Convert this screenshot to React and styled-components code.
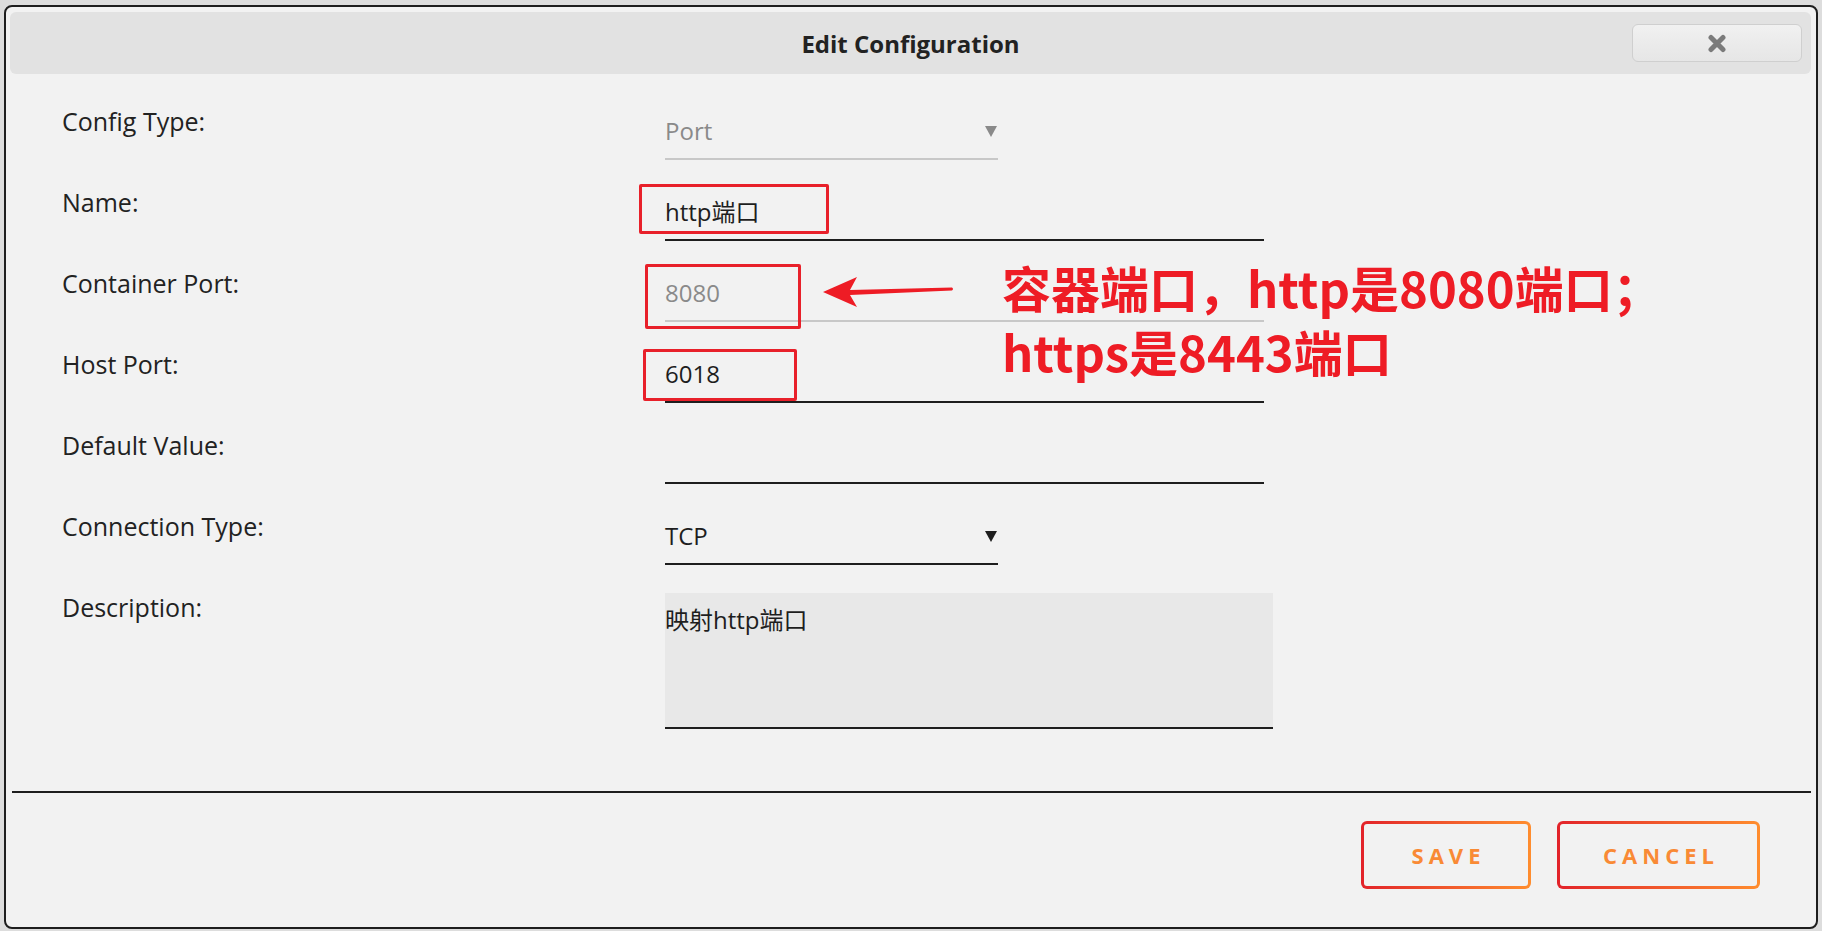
import React from 'react';
import styled, { createGlobalStyle } from 'styled-components';

const GlobalStyle = createGlobalStyle`
    html {
        background: #dddddd;
    }
    body {
        margin: 5px 4px 2px 4px;
        font-family: "Open Sans", "Noto Sans CJK SC", sans-serif;
    }
`;

const CloseIcon = () => (
    <svg width="20" height="19" viewBox="0 0 20 19">
        <path d="M4 3.5 L16 15.5 M16 3.5 L4 15.5" stroke="#7b7b7b" strokeWidth="5" strokeLinecap="round" fill="none" />
    </svg>
);

const Caret = ({ muted }) => (
    <svg width="12" height="12" viewBox="0 0 12 12">
        <polygon points="0,1 12,1 6,12" fill={muted ? '#8a8a8a' : '#1e1e1e'} />
    </svg>
);

const Arrow = () => (
    <svg width="141" height="40" viewBox="0 0 141 40">
        <path d="M3 18 L37 3 L30 16 L132 13.5 Q134 15 132 16.5 L30 21 L37 33 Z" fill="#ee1c25" />
    </svg>
);

const fields = [
    { label: 'Config Type:', kind: 'select', value: 'Port', disabled: true },
    { label: 'Name:', kind: 'input', value: 'http端口' },
    { label: 'Container Port:', kind: 'input', value: '8080', disabled: true },
    { label: 'Host Port:', kind: 'input', value: '6018' },
    { label: 'Default Value:', kind: 'input', value: '' },
    { label: 'Connection Type:', kind: 'select', value: 'TCP' },
];

const App = () => {
    return (
        <>
            <GlobalStyle />
            <Frame>
                <Header>
                    <span />
                    <Title>Edit Configuration</Title>
                    <CloseButton aria-label="close">
                        <CloseIcon />
                    </CloseButton>
                </Header>
                <Body>
                    {fields.map((f) => (
                        <Row key={f.label}>
                            <Label>{f.label}</Label>
                            {f.kind === 'select' ? (
                                <SelectField $disabled={f.disabled}>
                                    <Value $muted={f.disabled}>{f.value}</Value>
                                    <Caret muted={f.disabled} />
                                </SelectField>
                            ) : (
                                <TextField $disabled={f.disabled}>
                                    <Input defaultValue={f.value} readOnly $muted={f.disabled} />
                                </TextField>
                            )}
                        </Row>
                    ))}
                    <Row>
                        <Label>Description:</Label>
                        <TextArea defaultValue="映射http端口" readOnly />
                    </Row>
                </Body>
                <Divider />
                <Footer>
                    <ActionButton $width={170}>SAVE</ActionButton>
                    <ActionButton $width={203}>CANCEL</ActionButton>
                </Footer>

                <Marker style={{ left: 633, top: 177, width: 190, height: 50 }} />
                <Marker style={{ left: 639, top: 257, width: 156, height: 65 }} />
                <Marker style={{ left: 637, top: 342, width: 154, height: 52 }} />
                <ArrowWrap>
                    <Arrow />
                </ArrowWrap>
                <Note>
                    容器端口，http是8080端口；
                    <br />
                    https是8443端口
                </Note>
            </Frame>
        </>
    );
};

const Frame = styled.div`
    position: relative;
    box-sizing: border-box;
    border: 2px solid #1e1e1e;
    border-radius: 8px;
    background: #f2f2f2;
    padding: 5px 5px 0 4px;
`;

const Header = styled.div`
    display: grid;
    grid-template-columns: 1fr auto 1fr;
    align-items: center;
    height: 62px;
    background: #e2e2e2;
    border-radius: 6px;
`;

const Title = styled.div`
    font-family: "Open Sans", sans-serif;
    font-weight: 700;
    font-size: 24px;
    color: #222222;
`;

const CloseButton = styled.button`
    justify-self: end;
    margin-right: 9px;
    width: 170px;
    height: 38px;
    display: flex;
    align-items: center;
    justify-content: center;
    border: 1px solid #cfcfcf;
    border-radius: 6px;
    background: linear-gradient(#f1f1f1, #ebebeb 50%, #e6e6e6);
    padding: 0;
`;

const Body = styled.div`
    display: flex;
    flex-direction: column;
    gap: 27px;
    padding: 32px 0 62px 52px;
`;

const Row = styled.div`
    display: grid;
    grid-template-columns: 603px auto;
    align-items: start;
`;

const Label = styled.div`
    font-size: 25px;
    line-height: 30px;
    color: #222222;
`;

const SelectField = styled.div`
    width: 332px;
    margin-top: 10px;
    padding-bottom: 12px;
    height: 30px;
    display: flex;
    align-items: center;
    justify-content: space-between;
    padding-right: 1px;
    box-sizing: content-box;
    border-bottom: 2px solid ${(p) => (p.$disabled ? '#c8c8c8' : '#1e1e1e')};
`;

const Value = styled.span`
    font-size: 24px;
    line-height: 30px;
    color: ${(p) => (p.$muted ? '#8a8a8a' : '#1e1e1e')};
`;

const TextField = styled.div`
    width: 599px;
    margin-top: 10px;
    padding-bottom: 12px;
    border-bottom: 2px solid ${(p) => (p.$disabled ? '#c8c8c8' : '#1e1e1e')};
`;

const Input = styled.input`
    display: block;
    width: 100%;
    height: 30px;
    padding: 0;
    border: none;
    outline: none;
    background: transparent;
    font-family: "Open Sans", "Noto Sans CJK SC", sans-serif;
    font-size: 24px;
    line-height: 30px;
    color: ${(p) => (p.$muted ? '#8a8a8a' : '#1e1e1e')};
`;

const TextArea = styled.textarea`
    display: block;
    box-sizing: border-box;
    width: 608px;
    height: 136px;
    margin-top: 1px;
    padding: 12px 0 0 0;
    border: none;
    border-bottom: 2px solid #1e1e1e;
    outline: none;
    resize: none;
    background: #e8e8e8;
    font-family: "Open Sans", "Noto Sans CJK SC", sans-serif;
    font-size: 24px;
    line-height: 30px;
    color: #1e1e1e;
`;

const Divider = styled.div`
    height: 2px;
    margin-left: 2px;
    background: #1e1e1e;
`;

const Footer = styled.div`
    display: flex;
    justify-content: flex-end;
    gap: 26px;
    padding: 28px 51px 38px 0;
`;

const ActionButton = styled.button`
    width: ${(p) => p.$width}px;
    height: 68px;
    padding: 0 0 0 5px;
    border: 3px solid transparent;
    border-radius: 6px;
    background: linear-gradient(#f2f2f2, #f2f2f2) padding-box,
        linear-gradient(90deg, #e2232a, #ff8d2e) border-box;
    font-family: "Open Sans", sans-serif;
    font-weight: 700;
    font-size: 22px;
    letter-spacing: 5px;
    color: #f98a35;
`;

const Marker = styled.div`
    position: absolute;
    box-sizing: border-box;
    border: 3px solid #e8202a;
    border-radius: 2px;
`;

const ArrowWrap = styled.div`
    position: absolute;
    left: 814px;
    top: 267px;
    line-height: 0;
`;

const Note = styled.div`
    position: absolute;
    left: 996px;
    top: 248px;
    font-family: "Noto Sans CJK SC", sans-serif;
    font-weight: 700;
    font-size: 49px;
    line-height: 64px;
    color: #ee1c25;
    white-space: nowrap;
`;

export default App;
